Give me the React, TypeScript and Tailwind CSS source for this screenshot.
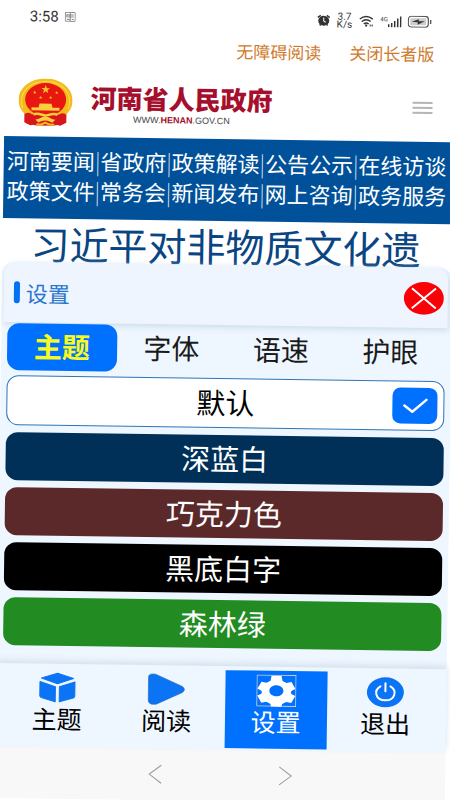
import React, { useState } from 'react';

const navRows = [
  ['河南要闻', '省政府', '政策解读', '公告公示', '在线访谈'],
  ['政策文件', '常务会', '新闻发布', '网上咨询', '政务服务'],
];

const tabs = ['主题', '字体', '语速', '护眼'];

const themes = [
  { name: '默认', className: 'h-[50px] bg-white text-black border border-[#2f76b5]' },
  { name: '深蓝白', className: 'h-12 bg-[#003057] text-white' },
  { name: '巧克力色', className: 'h-12 bg-[#5c292a] text-white' },
  { name: '黑底白字', className: 'h-12 bg-black text-white' },
  { name: '森林绿', className: 'h-12 bg-[#228b22] text-white' },
];

const Star = ({ x, y, r }: { x: number; y: number; r: number }) => (
  <path
    transform={`translate(${x} ${y}) scale(${r})`}
    d="M0-1 .24-.32 .95-.31 .38.12 .59.81 0 .4-.59.81-.38.12-.95-.31-.24-.32Z"
    fill="#f9c52b"
  />
);

const Emblem = () => (
  <svg width="54" height="48" viewBox="0 0 54 48" aria-hidden="true">
    <path d="M6 32v12l6 3 8-2h14l8 2 6-3V32Z" fill="#d9161b" />
    <path d="M27 0C42 0 54 9 54 22c0 6-3 11-7 14H7C3 33 0 28 0 22 0 9 12 0 27 0Z" fill="#f3bb1c" />
    <path d="M4 30C-1 14 11 3 27 3s28 11 23 27" fill="none" stroke="#fadc4d" strokeWidth="1" />
    <ellipse cx="27" cy="21" rx="20.500" ry="16.500" fill="#e8170f" />
    <Star x={27} y={11} r={4.5} />
    <Star x={16} y={14} r={1.8} />
    <Star x={38} y={14} r={1.8} />
    <Star x={22} y={19} r={1.8} />
    <Star x={32} y={19} r={1.8} />
    <path d="M21 25h12l1 4h7v3H13v-3h7Z" fill="#f9cf3d" />
    <path d="M7 35q3-1 5 0l4 3q5 0 11-3 6 3 11 3l4-3q2-1 5 0l-2 10-10 2H18L8 45Z" fill="#d9161b" />
    <path d="M15 36c5-2 9 1 12 1s7-3 12-1" fill="none" stroke="#f9cf3d" strokeWidth="2.500" />
    <path d="M17 41c4 0 6-3 10-3s6 3 10 3l-3 3c-3-1-4-2-7-2s-4 1-7 2Z" fill="#f9cf3d" />
    <path d="M18 46h5l4-2 4 2h5" fill="none" stroke="#f3bb1c" strokeWidth="2" />
  </svg>
);

const CubeIcon = () => (
  <svg width="38" height="32" viewBox="0 0 38 32" fill="#0b74f5" stroke="#0b74f5" strokeLinejoin="round" aria-hidden="true">
    <path d="M19 1.500 35 6.500 19 12 3 6.500Z" />
    <path d="M1.500 10 17 15v15L3 26q-1.500-.5-1.500-2Z" />
    <path d="M36.500 10 21 15v15l14-4q1.500-.5 1.500-2Z" />
  </svg>
);

const PlayIcon = () => (
  <svg width="38" height="32" viewBox="0 0 38 32" fill="#0b74f5" aria-hidden="true">
    <path d="M1 4q0-4 7-3l27 12q4 3 0 6L9 31q-8 1-8-4Z" stroke="#2465a9" strokeWidth=".6" />
  </svg>
);

const GearIcon = () => (
  <svg width="40" height="32" viewBox="0 0 40 32" aria-hidden="true">
    <rect x=".5" y=".5" width="39" height="31" fill="#0071ff" stroke="#c9cdd0" />
    <path
      fill="#fff"
      fillRule="evenodd"
      d="M15 1h10l1 5 4 2 5-1 4 7-4 2q-1 2 0 3l4 2-4 7-5-1-4 2-1 3H15l-1-3-4-2-5 1-4-7 4-2q1-1 0-3l-4-2 4-7 5 1 4-2ZM20 10.500c-4 0-7 2.500-7 5.500s3 5.500 7 5.500 7-2.500 7-5.500-3-5.500-7-5.500Z"
    />
  </svg>
);

const PowerIcon = () => (
  <svg width="38" height="32" viewBox="0 0 38 32" fill="none" stroke="#fff" strokeWidth="2" strokeLinecap="round" aria-hidden="true">
    <ellipse cx="19" cy="16" rx="18.500" ry="15" fill="#0b74f5" stroke="none" />
    <path d="M14 10c-7 4-5 14 5 14s12-10 5-14M19 7v8" />
  </svg>
);

const footerItems = [
  { name: '主题', icon: <CubeIcon /> },
  { name: '阅读', icon: <PlayIcon /> },
  { name: '设置', icon: <GearIcon />, active: true },
  { name: '退出', icon: <PowerIcon /> },
];

const StatusBar = () => (
  <div className="flex h-8 items-center justify-between px-6 font-['Roboto','Noto_Sans_CJK_SC',sans-serif] text-[#333]">
    <div className="flex items-center gap-1.5">
      <span className="text-[15px] leading-5">3:58</span>
      <svg width="11" height="10" viewBox="0 0 11 10" fill="none" stroke="#888" aria-hidden="true">
        <rect x=".5" y=".5" width="10" height="9" rx="1" />
        <path d="M2 3h3v2H2ZM6 3h3M6 5h3M2 7.500h3M7 7.500h2M5.500 1v8" />
      </svg>
    </div>
    <div className="flex items-center gap-1.5">
      <svg width="14" height="12" viewBox="0 0 14 12" aria-hidden="true">
        <path d="M1 3 4 1M13 3l-3-2M3 11l1-1M11 11l-1-1" stroke="#333" strokeWidth="1.500" />
        <ellipse cx="7" cy="6.300" rx="5.500" ry="5" fill="#333" />
        <path d="M7 3v3.500l2 1.500" stroke="#fff" fill="none" />
      </svg>
      <span className="text-center text-[10px] leading-2">
        3.7
        <br />
        K/s
      </span>
      <svg width="16" height="12" viewBox="0 0 16 12" fill="none" stroke="#333" strokeWidth="1.300" aria-hidden="true">
        <path d="M1 4q6.500-5 13 0M3 6.500q4.500-3.500 9 0M5 9q2.500-2 5 0" />
        <path d="M6.500 10.500h2M11 10.500h1M13 10.500h1" strokeWidth="2" />
      </svg>
      <span className="flex items-start">
        <span className="text-[6px] leading-2">4G</span>
        <svg width="14" height="12" viewBox="0 0 14 12" stroke="#333" strokeWidth="1.500" aria-hidden="true">
          <path d="M1 12V9M4 12V7.500M7 12V5.500M10 12V3M13 12V1" />
        </svg>
      </span>
      <svg width="24" height="12" viewBox="0 0 24 12" aria-hidden="true">
        <rect x=".6" y=".6" width="20" height="10.800" rx="3" fill="#fff" stroke="#555" strokeWidth="1.200" />
        <rect x="2.500" y="2.500" width="16" height="7" rx="1" fill="#ccc" />
        <path d="M4 6l7-2.500V5.500h6L10 9V6.500Z" fill="#333" />
        <path d="M23 4v4" stroke="#555" strokeWidth="1.500" />
      </svg>
    </div>
  </div>
);

const App: React.FC = () => {
  const [tab, setTab] = useState('主题');
  const [theme, setTheme] = useState('默认');

  return (
    <div className="min-h-screen overflow-hidden bg-white font-['Noto_Sans_CJK_SC',sans-serif]">
      {/* The whole screen leans slightly to the right */}
      <div className="ml-1.5 w-full origin-top-left rotate-[0.8deg]">
        <StatusBar />

        <div className="flex h-8 items-center justify-end gap-7 pr-[21px] text-[17px] leading-6 text-[#cf7a2c]">
          <a href="#read">无障碍阅读</a>
          <a href="#close">关闭长者版</a>
        </div>

        <header className="flex h-[72px] items-center pt-1 pr-[22px] pl-3.5">
          <Emblem />
          <div className="ml-[18px] flex flex-col items-center">
            <h1 className="text-[26px] leading-[30px] font-black whitespace-nowrap text-[#a50f2d]">河南省人民政府</h1>
            <p className="mt-px font-['Liberation_Sans',sans-serif] text-[9px] leading-3 text-[#444]">
              WWW.<b className="text-[#a50f2d]">HENAN</b>.GOV.CN
            </p>
          </div>
          <button aria-label="菜单" className="ml-auto flex w-5 flex-col gap-[3px]">
            <span className="h-0.5 w-full bg-[#b5b5b5]" />
            <span className="h-0.5 w-full bg-[#b5b5b5]" />
            <span className="h-0.5 w-full bg-[#b5b5b5]" />
          </button>
        </header>

        <nav className="flex h-[82px] flex-col items-center justify-center bg-[#00519a] pr-1 pb-1.5 text-[22px] leading-[30px] text-white">
          {navRows.map((row) => (
            <div key={row[0]} className="flex whitespace-nowrap">
              {row.map((item, i) => (
                <React.Fragment key={item}>
                  {i > 0 && <span className="font-thin">|</span>}
                  <a href="#nav">{item}</a>
                </React.Fragment>
              ))}
            </div>
          ))}
        </nav>

        <h2 className="pl-7 text-[39px] leading-[48px] whitespace-nowrap text-[#0a4583]">习近平对非物质文化遗</h2>

        <section className="relative -mt-1 rounded-t-xl bg-[#eef6ff]">
          <div className="mr-1 ml-0.5 flex h-[60px] items-center justify-between rounded-t-xl bg-[#eef5fe] pr-1 pl-2.5 shadow-[1px_2px_6px_#c9dbe8]">
            <h3 className="flex items-center gap-1.5 text-[22px] leading-7 text-[#2977cc]">
              <span className="h-[22px] w-1.5 rounded-sm bg-[#0071f5]" />
              设置
            </h3>
            <button aria-label="关闭">
              <svg width="40" height="33" viewBox="0 0 40 33" aria-hidden="true">
                <ellipse cx="20" cy="16.500" rx="20" ry="16.300" fill="#fb0007" />
                <path d="M8 6.500 32 26.500M32 6.500 8 26.500" stroke="#fff" strokeWidth="2" />
              </svg>
            </button>
          </div>

          <div className="relative px-1.5 pt-px pb-[18px]">
            <div className="flex h-[47px]">
              {tabs.map((name) => (
                <button
                  key={name}
                  onClick={() => setTab(name)}
                  className={
                    name === tab
                      ? 'flex-1 rounded-xl bg-[#0071ff] pb-1 text-[28px] leading-10 font-bold text-[#f8fb1d]'
                      : 'flex-1 pb-1 text-[28px] leading-10 text-[#1a1a1a]'
                  }
                >
                  {name}
                </button>
              ))}
            </div>

            <div className="mt-[5px] flex flex-col gap-[7px]">
              {themes.map(({ name, className }) => (
                <label
                  key={name}
                  className={`relative flex items-center justify-center rounded-xl pb-1 text-[29px] leading-10 ${className}`}
                >
                  <input
                    type="radio"
                    name="theme"
                    checked={name === theme}
                    onChange={() => setTheme(name)}
                    className="sr-only"
                  />
                  {name}
                  {name === theme && (
                    <span className="absolute top-1.5 right-1.5 flex h-9 w-[45px] items-center justify-center rounded-lg bg-[#0071ff]">
                      <svg width="26" height="16" viewBox="0 0 26 16" fill="none" aria-hidden="true">
                        <path d="m2 8 8 6L24 2" stroke="#fff" strokeWidth="2.500" strokeLinecap="round" strokeLinejoin="round" />
                      </svg>
                    </span>
                  )}
                </label>
              ))}
            </div>
          </div>
        </section>

        <footer className="relative flex h-[83px] bg-[#eef6ff] px-1.5 pt-1 pb-px shadow-[0_-3px_6px_#d3e0ec]">
          {footerItems.map(({ name, icon, active }) => (
            <button
              key={name}
              className={
                active
                  ? 'mx-1 flex flex-1 flex-col items-center bg-[#0071ff] pt-1 text-[25px] leading-7 text-white'
                  : 'mx-1 flex flex-1 flex-col items-center pt-1 text-[25px] leading-7 text-black'
              }
            >
              {icon}
              {name}
            </button>
          ))}
        </footer>

        <div className="flex h-[52px] items-center justify-center gap-[116px] bg-[#f8f8f8]">
          <button aria-label="后退">
            <svg width="14" height="20" viewBox="0 0 14 20" fill="none" stroke="#999" aria-hidden="true">
              <path d="M13 1 1 10l12 9" />
            </svg>
          </button>
          <button aria-label="前进">
            <svg width="14" height="20" viewBox="0 0 14 20" fill="none" stroke="#999" aria-hidden="true">
              <path d="m1 1 12 9-12 9" />
            </svg>
          </button>
        </div>
      </div>
    </div>
  );
};

export default App;
